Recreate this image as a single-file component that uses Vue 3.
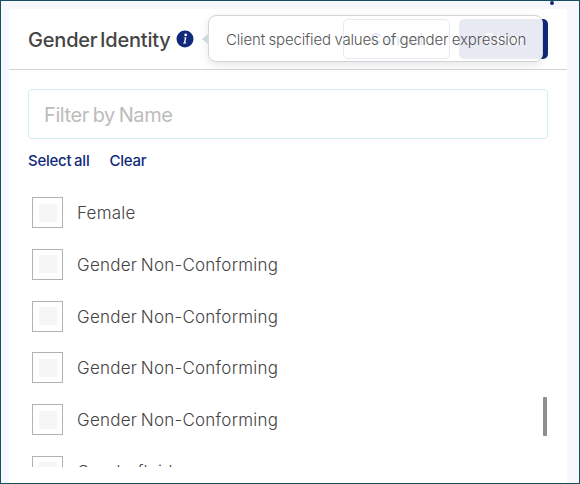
<script setup>
const items = ['Female', 'Gender Non-Conforming', 'Gender Non-Conforming', 'Gender Non-Conforming', 'Gender Non-Conforming', 'Genderfluid']
</script>

<template>
  <div class="frame">
    <span class="dot"></span>
    <section class="panel">
      <header class="head">
        <h2 class="title">Gender Identity</h2>
        <svg class="info" width="18" height="18" viewBox="0 0 18 18">
          <circle cx="9" cy="9" r="8.5" fill="#11297a" />
          <circle cx="9.7" cy="4.9" r="1.35" fill="#fff" />
          <path d="M7.3 7.6h3.1l-1 4.7c-.1.4.1.5.9.4l-.2.9H6.9l.2-.9c.6 0 .8-.1.9-.5l.7-3.5c.1-.5-.1-.6-.6-.6z" fill="#fff" />
        </svg>
        <div class="actions">
          <button class="btn cancel">Cancel</button>
          <button class="btn save">Save</button>
        </div>
        <div class="tooltip">Client specified values of gender expression</div>
      </header>
      <div class="body">
        <input class="filter" placeholder="Filter by Name" />
        <div class="links"><a>Select all</a><a>Clear</a></div>
        <ul class="list">
          <li v-for="(item, i) in items" :key="i" class="row">
            <span class="box"><span class="inner"></span></span>
            <span class="label">{{ item }}</span>
          </li>
        </ul>
        <span class="thumb"></span>
      </div>
    </section>
  </div>
</template>

<style>
html, body { margin: 0; padding: 0; }
</style>

<style scoped>
.frame {
  position: relative;
  box-sizing: border-box;
  width: 580px;
  height: 484px;
  padding: 8px 12px 0 8px;
  background: #f6f8fd;
  border: 1px solid #14505f;
  overflow: hidden;
  font-family: Inter, "Liberation Sans", sans-serif;
}
.dot {
  position: absolute;
  left: 549px;
  top: 0;
  width: 4px;
  height: 4px;
  border-radius: 50%;
  background: #11297a;
}
.panel {
  height: 100%;
  background: #fff;
  display: flex;
  flex-direction: column;
}
.head {
  position: relative;
  box-sizing: border-box;
  height: 61px;
  flex: none;
  display: flex;
  align-items: center;
  padding: 2px 19px 0 19px;
  border-bottom: 1px solid #d3d5d6;
}
.title {
  margin: 0;
  font-size: 20px;
  font-weight: 500;
  letter-spacing: -0.2px;
  word-spacing: -2.5px;
  color: #444;
}
.info { margin-left: 5px; margin-top: -2px; }
.actions {
  margin-left: auto;
  display: flex;
  gap: 9px;
  margin-top: -2px;
}
.btn {
  height: 40px;
  border-radius: 5px;
  font: 600 16px Inter, sans-serif;
  padding: 0;
}
.cancel {
  width: 107px;
  background: #fff;
  border: 1px solid #11297a;
  color: #11297a;
}
.save {
  width: 89px;
  border: 0;
  background: #11297a;
  color: #fff;
}
.tooltip {
  position: absolute;
  left: 199px;
  top: 6px;
  box-sizing: border-box;
  width: 335px;
  height: 47px;
  padding: 1px 0 0 17px;
  display: flex;
  align-items: center;
  border: 1px solid #d2d4d5;
  border-radius: 8px;
  background: rgba(255, 255, 255, 0.9);
  box-shadow: 0 3px 10px rgba(0, 0, 0, 0.1);
  font-size: 15px;
  font-weight: 300;
  letter-spacing: -0.16px;
  word-spacing: -0.5px;
  color: #555;
  white-space: nowrap;
}
.tooltip::before {
  content: "";
  position: absolute;
  left: -7px;
  top: 17px;
  border-style: solid;
  border-width: 6px 7px 6px 0;
  border-color: transparent #d3dadd transparent transparent;
}
.body {
  position: relative;
  flex: 1;
  min-height: 0;
  padding: 19px 19px 0;
  display: flex;
  flex-direction: column;
}
.filter {
  box-sizing: border-box;
  width: 520px;
  height: 50px;
  flex: none;
  padding: 2px 15px 0;
  border: 1px solid #d5eef5;
  border-radius: 4px;
  outline: none;
  background: #fff;
  font: 400 20px Inter, sans-serif;
  letter-spacing: -0.4px;
  word-spacing: -1.5px;
}
.filter::placeholder { color: #bcbcbc; opacity: 1; }
.links {
  display: flex;
  gap: 20px;
  margin-top: 11px;
  height: 20px;
  align-items: center;
  font-size: 15px;
  font-weight: 500;
  letter-spacing: -0.25px;
  word-spacing: -1px;
  color: #11297a;
}
.list {
  list-style: none;
  margin: 27px 0 0;
  padding: 0 0 0 4px;
  height: 270px;
  overflow: hidden;
}
.row {
  height: 51.75px;
  display: flex;
  align-items: flex-start;
  gap: 14px;
}
.box {
  box-sizing: border-box;
  width: 31px;
  height: 31px;
  flex: none;
  display: flex;
  align-items: center;
  justify-content: center;
  border: 1px solid #aeb3b7;
  background: #fff;
}
.inner {
  width: 18px;
  height: 18px;
  background: #f7f6f4;
}
.label {
  font-size: 17px;
  font-weight: 300;
  line-height: 32px;
  letter-spacing: 0.25px;
  word-spacing: -1.5px;
  color: #444;
}
.thumb {
  position: absolute;
  left: 534px;
  top: 327px;
  width: 4px;
  height: 39px;
  border-radius: 1px;
  background: #8f8f8f;
}
</style>
